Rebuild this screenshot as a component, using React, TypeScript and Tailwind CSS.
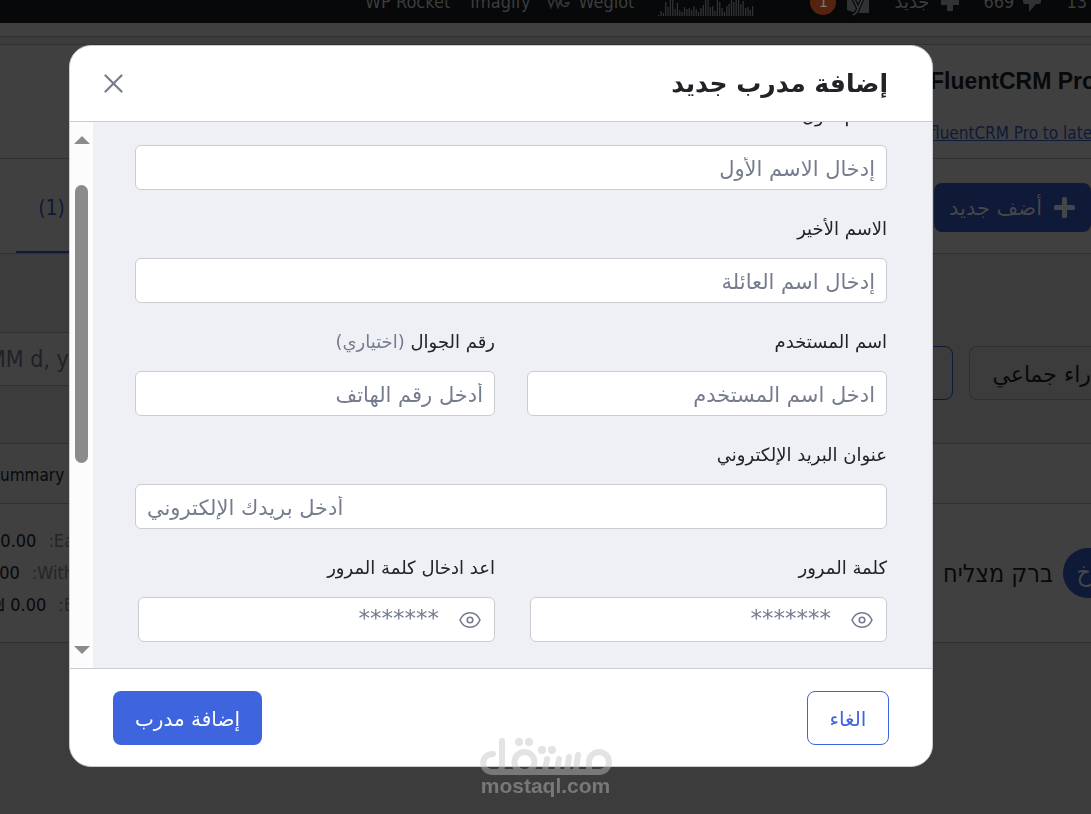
import type { ReactNode } from "react";

const CHART_BARS = [1, 5, 3, 14, 9, 20, 20, 7, 13, 6, 4, 9, 7, 8, 6, 10, 7, 4, 8, 11, 20, 16, 9, 10, 5, 20, 14, 8, 4, 10, 12, 20, 14, 16, 20, 12, 15, 8, 9, 6, 10];

const SUMMARY = [
  { currency: "", amount: "0.00", label: "Ea" },
  { currency: "", amount: "00", label: "With" },
  { currency: "₪", amount: "0.00", label: "E" },
];

function EyeIcon() {
  return (
    <svg width="22" height="18" viewBox="0 0 22 18" fill="none" stroke="currentColor" strokeWidth="1.6">
      <path d="M1 9c2-4.600 5.600-7.200 10-7.200S19 4.400 21 9c-2 4.600-5.600 7.200-10 7.200S3 13.600 1 9z" strokeLinejoin="round" />
      <circle cx="11" cy="9" r="2.800" />
    </svg>
  );
}

function PlusIcon() {
  return (
    <svg width="21" height="21" viewBox="0 0 21 21" fill="currentColor">
      <rect x="8" y="0" width="5" height="21" rx="1.500" />
      <rect x="0" y="8" width="21" height="5" rx="1.500" />
    </svg>
  );
}

function AdminBar() {
  return (
    <div className="flex h-[23px] items-end overflow-hidden bg-[#07080a] font-['DejaVu_Sans_Condensed','DejaVu_Sans',sans-serif] text-lg text-[#3c3d3e]">
      <div className="flex h-[42px] shrink-0 items-center ps-1">
        <span>13</span>
        <svg className="ms-6" width="20" height="22" viewBox="0 0 20 22" fill="#303234">
          <path d="M3 0h14a2 2 0 0 1 2 2v9a2 2 0 0 1-2 2h-3l-7 8v-8H3a2 2 0 0 1-2-2V2a2 2 0 0 1 2-2z" />
        </svg>
        <span className="ms-2">669</span>
        <svg className="ms-6" width="18" height="18" viewBox="0 0 18 18" fill="#303234">
          <path d="M6 0h6v6h6v6h-6v6H6v-6H0V6h6z" />
        </svg>
        <span className="ms-3 font-['DejaVu_Sans',sans-serif]">جديد</span>
        <svg className="ms-6 mt-2" width="24" height="26" viewBox="0 0 24 26">
          <path d="M4 0h19v20H10L1 17V3z" fill="#303234" />
          <path d="M7 5l5 10M19 0l-7 16c-1 3-2 5-5 6" stroke="#08090b" strokeWidth="4" fill="none" />
          <path d="M7 5l5 10M19 0l-7 16c-1 3-2 5-5 6" stroke="#3c3d3e" strokeWidth="1.500" fill="none" />
        </svg>
        <span className="ms-2.5 flex size-[26px] items-center justify-center rounded-full bg-[#552411] text-base text-[#777]">1</span>
        <svg className="ms-14 mt-2" width="96" height="24" viewBox="0 0 96 24" fill="#303234">
          {CHART_BARS.map((h, i) => (
            <rect key={i} x={i * 2.35} y={22 - h} width="1.300" height={h} />
          ))}
        </svg>
        <span className="ms-6">Weglot</span>
        <svg className="ms-2" width="24" height="14" viewBox="0 0 24 14" fill="none" stroke="#303234" strokeWidth="1.800">
          <path d="M1 1l4 11 4-10 3 10 4-11M23 2c-4-2-8 1-8 5 0 5 6 6 8 1h-4" />
        </svg>
        <span className="ms-4">Imagify</span>
        <span className="ms-5">WP Rocket</span>
      </div>
    </div>
  );
}

function Backdrop() {
  return (
    <div className="min-h-screen overflow-hidden bg-[#3c3c3c]">
      <AdminBar />
      <div className="h-[14px] border-b border-[#303030] bg-[#404040]" />
      <div className="mt-[7px] flex h-[115px] flex-col items-start border-y border-[#303030] bg-[#404040] pt-5">
        <div dir="ltr" className="flex w-[161px] flex-col gap-6">
          <h2 className="font-['Liberation_Sans'] text-[23px] leading-8 font-bold whitespace-nowrap text-[#08090b]">FluentCRM Pro</h2>
          <a
            href="#"
            className="font-['DejaVu_Sans_Condensed','DejaVu_Sans',sans-serif] text-[17px] leading-6 whitespace-nowrap text-[#0f1938] underline"
          >
            fluentCRM Pro to late
          </a>
        </div>
      </div>
      <div className="flex h-[95px] items-center justify-between border-b border-[#303030] bg-[#404040] pt-0.5">
        <button className="flex h-[49px] w-[157px] items-center gap-3 rounded-lg bg-[#0f1938] ps-4 text-[21px] whitespace-nowrap text-[#45464a]">
          <PlusIcon />
          <span className="pt-1">أضف جديد</span>
        </button>
        <button className="me-4 h-full w-[53px] border-b-2 border-[#0f1938] ps-1 pt-1.5 text-start font-['DejaVu_Sans_Condensed','DejaVu_Sans',sans-serif] text-[21px] text-[#0f1938]">
          <span dir="ltr">(1)</span>
        </button>
      </div>
      <div className="flex h-[189px] items-center justify-between overflow-hidden pt-12">
        <div className="flex gap-4">
          <button className="h-[54px] w-[122px] rounded-e-lg border border-s-0 border-[#303030] pt-1 text-start text-[22px] whitespace-nowrap text-[#08090b]">
            راء جماعي
          </button>
          <button aria-label="تطبيق" className="h-[54px] w-10 rounded-lg border border-[#0f1938]" />
        </div>
        <input
          aria-label="التاريخ"
          dir="ltr"
          placeholder="MM d, yy"
          className="mb-7 h-[54px] w-24 border-y border-[#303030] bg-[#404040] -indent-3 font-['DejaVu_Sans_Condensed','DejaVu_Sans',sans-serif] text-[23px] placeholder:text-[#1f2126]"
        />
      </div>
      <table className="w-full bg-[#404040] font-['DejaVu_Sans_Condensed','DejaVu_Sans',sans-serif] text-[#08090b]">
        <thead>
          <tr className="h-[60px] border-y border-[#303030] bg-[#3f3f3f]">
            <th />
            <th dir="ltr" className="pt-1 text-left text-[17px] font-normal">
              ummary
            </th>
          </tr>
        </thead>
        <tbody>
          <tr className="h-[139px] border-b border-[#303030]">
            <td>
              <div className="flex items-center gap-2.5 text-[25px]">
                <span className="flex h-[50px] w-7 items-center overflow-hidden rounded-e-full bg-[#0f1938] text-[#45464a]">خ</span>
                <span className="pt-0.5">ברק מצליח</span>
              </div>
            </td>
            <td dir="ltr" className="w-[74px] text-lg">
              {SUMMARY.map((row) => (
                <div key={row.label} className="flex h-8 w-[74px] items-center justify-end gap-3 overflow-hidden">
                  <span className="flex gap-1.5">
                    {row.currency && <span>{row.currency}</span>}
                    <span>{row.amount}</span>
                  </span>
                  <span className="text-[#242528]">:{row.label}</span>
                </div>
              ))}
            </td>
          </tr>
        </tbody>
      </table>
    </div>
  );
}

type FieldProps = {
  id: string;
  label: string;
  hint?: string;
  placeholder: string;
  className?: string;
};

function Field({ id, label, hint, placeholder, className = "" }: FieldProps) {
  return (
    <div>
      <FieldLabel id={id}>
        {label} {hint && <span className="text-[#757c8e]">{hint}</span>}
      </FieldLabel>
      <input
        id={id}
        placeholder={placeholder}
        className={`block h-[45px] w-full rounded-md border border-[#cbccd2] bg-white px-[11px] pt-0.5 text-[21px] placeholder:text-[#757c8e] ${className}`}
      />
    </div>
  );
}

function FieldLabel({ id, children }: { id: string; children: ReactNode }) {
  return (
    <label htmlFor={id} className="mb-[14px] block text-lg leading-[30px] text-[#212327]">
      {children}
    </label>
  );
}

function PasswordField({ id, label }: { id: string; label: string }) {
  return (
    <div>
      <FieldLabel id={id}>{label}</FieldLabel>
      <div className="me-[3px] flex h-[45px] items-center gap-5 rounded-md border border-[#cbccd2] bg-white px-[13px] text-[#757c8e]">
        <button type="button" aria-label="إظهار" className="shrink-0">
          <EyeIcon />
        </button>
        <input id={id} type="password" placeholder="*******" className="h-full min-w-0 flex-1 pb-1 text-[23px] placeholder:text-[#757c8e]" />
      </div>
    </div>
  );
}

function Scrollbar() {
  return (
    <div className="flex w-[23px] shrink-0 flex-col items-center bg-[#fcfcfc] py-[14px] text-[#8b8b8b]">
      <svg width="16" height="8" viewBox="0 0 16 8" fill="currentColor">
        <path d="M8 0l8 8H0z" />
      </svg>
      <div className="mt-[41px] h-[278px] w-[13px] rounded-full bg-[#8b8b8b]" />
      <svg className="mt-auto" width="16" height="8" viewBox="0 0 16 8" fill="currentColor">
        <path d="M0 0h16L8 8z" />
      </svg>
    </div>
  );
}

function TrainerModal() {
  return (
    <div className="fixed inset-0 flex pt-[45px] pr-[158px] pb-[47px] pl-[69px]">
      <form className="flex min-w-0 flex-1 flex-col overflow-hidden rounded-[22px] border border-[#cbccd2] bg-white">
        <header className="flex h-[76px] shrink-0 items-center justify-between border-b border-[#cbccd2] ps-11 pe-[34px]">
          <h1 className="text-[25px] font-bold text-[#212327]">إضافة مدرب جديد</h1>
          <button type="button" aria-label="إغلاق" className="text-[#757c8e]">
            <svg width="19" height="19" viewBox="0 0 19 19" stroke="currentColor" strokeWidth="2.200" strokeLinecap="round">
              <path d="M1.500 1.500l16 16M17.500 1.500l-16 16" />
            </svg>
          </button>
        </header>
        <div className="flex min-h-0 flex-1">
          <div className="flex min-w-0 flex-1 flex-col justify-end gap-6 overflow-hidden bg-[#eff0f6] ps-[45px] pe-[42px] pb-[26px]">
            <Field id="first-name" label="الاسم الأول" placeholder="إدخال الاسم الأول" />
            <Field id="last-name" label="الاسم الأخير" placeholder="إدخال اسم العائلة" />
            <div className="grid grid-cols-2 gap-8">
              <Field id="username" label="اسم المستخدم" placeholder="ادخل اسم المستخدم" />
              <Field id="phone" label="رقم الجوال" hint="(اختياري)" placeholder="أدخل رقم الهاتف" />
            </div>
            <Field id="email" label="عنوان البريد الإلكتروني" placeholder="أدخل بريدك الإلكتروني" className="text-left" />
            <div className="grid grid-cols-2 gap-8">
              <PasswordField id="password" label="كلمة المرور" />
              <PasswordField id="password-repeat" label="اعد ادخال كلمة المرور" />
            </div>
          </div>
          <Scrollbar />
        </div>
        <footer className="flex h-[98px] shrink-0 items-center justify-between border-t border-[#cbccd2] px-[43px]">
          <button type="button" className="h-[54px] w-[82px] rounded-lg border border-[#3e64de] pt-0.5 text-xl text-[#3e64de]">
            الغاء
          </button>
          <button className="h-[54px] w-[149px] rounded-lg bg-[#3e64de] pt-0.5 text-xl text-white">إضافة مدرب</button>
        </footer>
      </form>
    </div>
  );
}

function Watermark() {
  return (
    <div className="pointer-events-none fixed inset-x-0 bottom-[18px] flex flex-col items-center opacity-45">
      <svg width="132" height="39" viewBox="0 0 132 39" fill="none" stroke="#c0c0c0" strokeWidth="6" strokeLinecap="round">
        <path d="M13 17C0 17 0 35 13 35H119a10 10 0 1 0-10-10V35M22 4V29q0 6-5 6M43 35a10 10 0 1 1 6-1M67 22l-2 12M79 22l-2 12M89 20l-2 13M98 18l-2 14" />
        <g fill="#c0c0c0" stroke="none">
          <circle cx="39" cy="5" r="4" />
          <circle cx="49" cy="5" r="4" />
          <circle cx="62" cy="13" r="4" />
          <circle cx="72" cy="13" r="4" />
        </g>
      </svg>
      <span className="font-['Liberation_Sans'] text-[21px] leading-5 font-bold text-[#c0c0c0]">mostaql.com</span>
    </div>
  );
}

export default function App() {
  return (
    <div dir="rtl" className="font-['DejaVu_Sans',sans-serif]">
      <Backdrop />
      <TrainerModal />
      <Watermark />
    </div>
  );
}
